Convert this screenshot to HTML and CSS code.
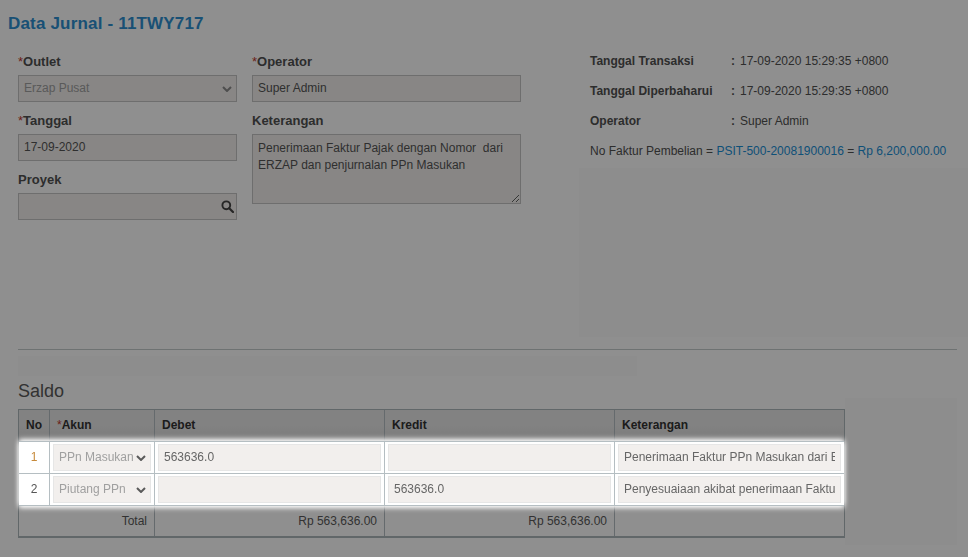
FILE: index.html
```html
<!DOCTYPE html>
<html lang="id">
<head>
<meta charset="utf-8">
<title>Data Jurnal</title>
<link rel="stylesheet" href="styles.css">
</head>
<body>
<div class="page">
  <h1 class="title">Data Jurnal - 11TWY717</h1>
  <section class="form-area">
    <div class="col col-a">
      <div class="field">
        <label class="label"><span class="req">*</span>Outlet</label>
        <div class="select-wrap">
          <select class="control select-muted"><option>Erzap Pusat</option></select>
          <svg class="chev" viewBox="0 0 10 6" width="10" height="6" aria-hidden="true"><path d="M1 1l4 4 4-4" fill="none" stroke="currentColor" stroke-width="2"/></svg>
        </div>
      </div>
      <div class="field">
        <label class="label"><span class="req">*</span>Tanggal</label>
        <input class="control" value="17-09-2020">
      </div>
      <div class="field">
        <label class="label">Proyek</label>
        <div class="search-wrap">
          <input class="control">
          <svg class="search-icon" viewBox="0 0 13 13" width="13" height="13" aria-hidden="true"><circle cx="5.3" cy="5.3" r="3.9" fill="none" stroke="currentColor" stroke-width="1.9"/><path d="M8.2 8.2 12 12" stroke="currentColor" stroke-width="2.2" stroke-linecap="round"/></svg>
        </div>
      </div>
    </div>
    <div class="col col-b">
      <div class="field">
        <label class="label"><span class="req">*</span>Operator</label>
        <input class="control" value="Super Admin">
      </div>
      <div class="field">
        <label class="label">Keterangan</label>
        <textarea class="control note">Penerimaan Faktur Pajak dengan Nomor  dari ERZAP dan penjurnalan PPn Masukan</textarea>
      </div>
    </div>
    <div class="col col-c">
      <div class="info"><b>Tanggal Transaksi</b><b>:</b><span>17-09-2020 15:29:35 +0800</span></div>
      <div class="info"><b>Tanggal Diperbaharui</b><b>:</b><span>17-09-2020 15:29:35 +0800</span></div>
      <div class="info"><b>Operator</b><b>:</b><span>Super Admin</span></div>
      <p class="faktur">No Faktur Pembelian = <a class="link">PSIT-500-20081900016</a> = <a class="link">Rp 6,200,000.00</a></p>
      <div class="panel-ghost"></div>
    </div>
  </section>
  <hr class="rule">
  <div class="band-ghost"></div>
  <h2 class="saldo">Saldo</h2>
  <div class="table-wrap">
    <div class="table">
      <div class="row head">
        <div class="cell center">No</div>
        <div class="cell"><span class="req thin">*</span>Akun</div>
        <div class="cell">Debet</div>
        <div class="cell">Kredit</div>
        <div class="cell">Keterangan</div>
      </div>
      <div class="body">
        <div class="row line">
          <div class="cell center num-a">1</div>
          <div class="cell tight">
            <div class="select-wrap">
              <select class="control select-muted small"><option>PPn Masukan</option></select>
              <svg class="chev" viewBox="0 0 10 6" width="10" height="6" aria-hidden="true"><path d="M1 1l4 4 4-4" fill="none" stroke="currentColor" stroke-width="2"/></svg>
            </div>
          </div>
          <div class="cell tight"><input class="control wide" value="563636.0"></div>
          <div class="cell tight"><input class="control wide"></div>
          <div class="cell tight"><input class="control wide" value="Penerimaan Faktur PPn Masukan dari ERZAP"></div>
        </div>
        <div class="row line">
          <div class="cell center num-b">2</div>
          <div class="cell tight">
            <div class="select-wrap">
              <select class="control select-muted small"><option>Piutang PPn</option></select>
              <svg class="chev" viewBox="0 0 10 6" width="10" height="6" aria-hidden="true"><path d="M1 1l4 4 4-4" fill="none" stroke="currentColor" stroke-width="2"/></svg>
            </div>
          </div>
          <div class="cell tight"><input class="control wide"></div>
          <div class="cell tight"><input class="control wide" value="563636.0"></div>
          <div class="cell tight"><input class="control wide" value="Penyesuaiaan akibat penerimaan Faktur Pajak"></div>
        </div>
      </div>
      <div class="row foot">
        <div class="cell total-label">Total</div>
        <div class="cell right">Rp 563,636.00</div>
        <div class="cell right">Rp 563,636.00</div>
        <div class="cell"></div>
      </div>
    </div>
    <div class="side-ghost"></div>
  </div>
</div>
<div class="overlay"></div>
</body>
</html>
```
FILE: styles.css
```css
* { box-sizing: border-box; }
html, body { margin: 0; height: 100%; }
body {
  background: #fff;
  color: #505050;
  font: 12px/16px "Liberation Sans", Arial, sans-serif;
  overflow: hidden;
}
.page { height: 557px; padding: 14px 11px 0 18px; }
.overlay {
  position: fixed;
  inset: 0;
  background: rgba(0, 0, 0, .44);
  z-index: 5;
}
.title {
  margin: 0 0 0 -10px;
  font-size: 17px;
  line-height: 20px;
  font-weight: 700;
  color: #2d8fd0;
  letter-spacing: .18px;
}
.form-area { display: flex; margin-top: 17px; height: 298px; }
.col-a { width: 219px; margin-right: 15px; }
.col-b { width: 269px; margin-right: 69px; }
.col-c { flex: 1; min-width: 0; }
.panel-ghost {
  height: 169px;
  margin: 9px -11px 0;
  background: #fbfbfb;
}
.field { margin-bottom: 8px; }
.label {
  display: block;
  height: 20px;
  margin-bottom: 4px;
  font-weight: 700;
  font-size: 13px;
  line-height: 22px;
}
.req { color: #c0392b; font-weight: 400; }
.req.thin { font-size: 12px; }
.control {
  display: block;
  width: 100%;
  height: 27px;
  padding: 0 5px 2px;
  margin: 0;
  border: 1px solid #c4c4c4;
  border-radius: 0;
  outline: 0;
  background-color: #f2efed;
  color: #555;
  font: 12px "Liberation Sans", Arial, sans-serif;
  appearance: none;
}
.select-muted { color: #a0a0a0; padding-right: 16px; }
.select-wrap, .search-wrap { position: relative; }
.chev { position: absolute; top: 11px; right: 5px; color: #5a5a5a; pointer-events: none; }
.form-area .chev { color: #8c8c8c; }
.search-icon { position: absolute; top: 7px; right: 3px; color: #444; }
.note {
  height: 70px;
  padding: 5px;
  line-height: 17px;
  resize: both;
}
.info {
  display: grid;
  grid-template-columns: 141px 9px 1fr;
  height: 30px;
  padding-top: 2px;
}
.faktur { margin: 0; padding-top: 2px; white-space: nowrap; }
.link { color: #1a8fd6; }
.rule { margin: 0; border: 0; border-top: 1px solid #c4cbcb; }
.band-ghost {
  width: 619px;
  height: 20px;
  margin-top: 6px;
  background: #fbfbfb;
}
.saldo {
  margin: 4px 0 0;
  height: 29px;
  font-size: 18px;
  line-height: 22px;
  font-weight: 400;
  color: #5a5a5a;
}
.table-wrap { display: flex; align-items: flex-start; }
.side-ghost {
  width: 115px;
  height: 147px;
  margin-top: -11px;
  background: #fcfcfc;
}
.table {
  flex: none;
  width: 827px;
  border: 1px solid #aeb8bc;
  border-bottom: 2px solid #aeb8bc;
}
.row {
  display: grid;
  grid-template-columns: 30px 105px 230px 230px 1fr;
}
.cell {
  border-left: 1px solid #b5bec2;
  padding: 0 7px;
  min-width: 0;
}
.cell:first-child { border-left: 0; }
.head {
  height: 31px;
  background: linear-gradient(#e8e8e8 50%, #dcdcdc);
  line-height: 30px;
  font-weight: 700;
  color: #333;
}
.body {
  position: relative;
  z-index: 6;
  background: #fff;
  box-shadow: 0 2px 5px #fff, 0 -2px 5px #fff;
}
.line {
  height: 32px;
  border-top: 1px solid #b5bec2;
}
.line .cell { line-height: 31px; }
.line:last-child { border-bottom: 1px solid #b5bec2; height: 33px; }
.cell.tight { padding: 2px 3px 0; }
.center { text-align: center; padding: 0; }
.num-a { color: #c78a3b; }
.num-b { color: #555; }
.wide, .small { border-color: #e6e6e6; }
.wide { color: #666; }
.foot {
  height: 30px;
  line-height: 30px;
  color: #5a5a5a;
  grid-template-columns: 135px 230px 230px 1fr;
}
.total-label { text-align: right; padding-right: 7px; }
.right { text-align: right; padding-right: 7px; }
```
